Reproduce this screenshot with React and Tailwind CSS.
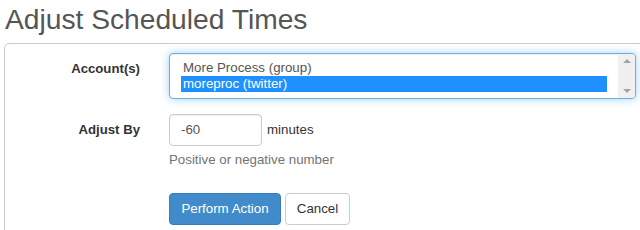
import React from "react";

export default function App() {
  const font = { fontFamily: '"Liberation Sans", Arial, sans-serif' };
  return (
    <div className="w-[640px] h-[230px] overflow-hidden bg-white" style={font}>
      <h1 className="ml-[5px] pt-[4px] text-[28.2px] leading-[31px] text-[#555] font-normal">
        Adjust Scheduled Times
      </h1>
      <div className="mt-[8px] ml-[4px] w-[660px] h-[200px] border border-[#ccc] rounded-tl-[5px] pt-[9px]">
        {/* Row 1 */}
        <div className="flex items-start">
          <div className="w-[135px] text-right pt-[7px] text-[13.2px] leading-[18px] font-bold text-[#333]">
            Account(s)
          </div>
          <div className="ml-[29px] w-[467px] h-[46px] flex rounded-[4px] border border-[#66afe9] shadow-[inset_0_1px_1px_rgba(0,0,0,0.075),0_0_8px_rgba(102,175,233,0.6)] bg-white overflow-hidden">
            <div className="flex-1 px-[11px] pt-[6px] text-[13.3px] leading-[16px]">
              <div className="pl-[2px] text-[#555]">More Process (group)</div>
              <div className="pl-[2px] bg-[#1e90ff] text-white">moreproc (twitter)</div>
            </div>
            <div className="w-[17px] bg-[#f0f0f0] flex flex-col items-center justify-between py-[5px]">
              <div className="w-0 h-0 border-l-[4px] border-r-[4px] border-b-[4px] border-l-transparent border-r-transparent border-b-[#a3a3a3]" />
              <div className="w-0 h-0 border-l-[4px] border-r-[4px] border-t-[4px] border-l-transparent border-r-transparent border-t-[#a3a3a3]" />
            </div>
          </div>
        </div>
        {/* Row 2 */}
        <div className="flex items-start mt-[15px]">
          <div className="w-[135px] text-right pt-[7px] text-[13.2px] leading-[18px] font-bold text-[#333]">
            Adjust By
          </div>
          <div className="ml-[29px]">
            <div className="flex items-center">
              <div className="w-[93px] h-[32px] border border-[#ccc] rounded-[4px] px-[11px] flex items-center text-[13.3px] text-[#555] shadow-[inset_0_1px_1px_rgba(0,0,0,0.075)]">
                -60
              </div>
              <span className="ml-[5px] text-[13.3px] text-[#333]">minutes</span>
            </div>
            <div className="mt-[5px] text-[13.3px] leading-[18px] text-[#737373]">
              Positive or negative number
            </div>
            <div className="mt-[24px] flex gap-[4px]">
              <button className="w-[112px] h-[32px] rounded-[4px] bg-[#428bca] border border-[#357ebd] text-white text-[13.3px]">
                Perform Action
              </button>
              <button className="w-[65px] h-[32px] rounded-[4px] bg-white border border-[#ccc] text-[#333] text-[13.3px]">
                Cancel
              </button>
            </div>
          </div>
        </div>
      </div>
    </div>
  );
}
